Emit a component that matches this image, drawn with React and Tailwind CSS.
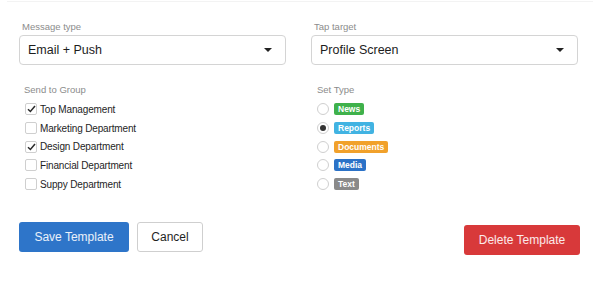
import React from 'react';

const font = { fontFamily: '"Liberation Sans", Arial, sans-serif' };

// Groups shown in the "Send to Group" list
const groups = [
    { name: 'Top Management', checked: true },
    { name: 'Marketing Department', checked: false },
    { name: 'Design Department', checked: true },
    { name: 'Financial Department', checked: false },
    { name: 'Suppy Department', checked: false },
];

// Types with their badge colours
const types = [
    { name: 'News', cls: 'bg-[#3fb14b]', checked: false },
    { name: 'Reports', cls: 'bg-[#41b3e2]', checked: true },
    { name: 'Documents', cls: 'bg-[#f1a12b]', checked: false },
    { name: 'Media', cls: 'bg-[#2b72c7]', checked: false },
    { name: 'Text', cls: 'bg-[#8a8a8a]', checked: false },
];

const Caret = () => (
    <svg width="8" height="4" viewBox="0 0 8 4" className="mr-[3px]">
        <path d="M0 0 L8 0 L4 4 Z" fill="#222" />
    </svg>
);

const SelectBox = ({ label, value }) => (
    <div>
        <div className="text-[9.5px] leading-[13px] text-[#8c8c8c] ml-[3px]">{label}</div>
        <div className="mt-[2px] h-[30px] rounded-[4px] border border-[#d4d4d4] bg-white flex items-center justify-between pl-[8px] pr-[10px]">
            <span className="text-[12.5px] text-[#1d1d1d]">{value}</span>
            <Caret />
        </div>
    </div>
);

const Checkbox = ({ checked }) => (
    <span className="w-[12px] h-[12px] rounded-[2px] border border-[#cfcfcf] bg-white flex items-center justify-center">
        {checked && (
            <svg width="9" height="8" viewBox="0 0 9 8">
                <path d="M1 4.2 L3.4 6.5 L8 1" stroke="#2a2a2a" strokeWidth="1.5" fill="none" />
            </svg>
        )}
    </span>
);

const Radio = ({ checked }) => (
    <span className="w-[12px] h-[12px] rounded-full border border-[#cfcfcf] bg-white flex items-center justify-center">
        {checked && <span className="w-[6px] h-[6px] rounded-full bg-[#333]" />}
    </span>
);

const App = () => {
    return (
        <div className="w-[600px] h-[283px] bg-white relative overflow-hidden" style={font}>
            {/* faint edge of the section above */}
            <div className="mx-[7px] h-[2px] border-b border-[#f3f3f3]" />

            <div className="px-[19px] pt-[18px]">
                {/* Selects row */}
                <div className="grid grid-cols-[267px_267px] gap-x-[25px]">
                    <SelectBox label="Message type" value="Email + Push" />
                    <SelectBox label="Tap target" value="Profile Screen" />
                </div>

                {/* Groups and types */}
                <div className="grid grid-cols-[267px_267px] gap-x-[25px] mt-[18px]">
                    <div className="pl-[5px]">
                        <div className="text-[9.5px] leading-[13px] text-[#8c8c8c]">Send to Group</div>
                        <div className="mt-[4px] flex flex-col">
                            {groups.map((g) => (
                                <div key={g.name} className="h-[18.7px] flex items-center gap-[3px] pl-[1px]">
                                    <Checkbox checked={g.checked} />
                                    <span className="text-[10px] tracking-[-0.15px] text-[#1e1e1e]">{g.name}</span>
                                </div>
                            ))}
                        </div>
                    </div>
                    <div className="pl-[6px]">
                        <div className="text-[9.5px] leading-[13px] text-[#8c8c8c]">Set Type</div>
                        <div className="mt-[4px] flex flex-col">
                            {types.map((t) => (
                                <div key={t.name} className="h-[18.7px] flex items-center gap-[5px]">
                                    <Radio checked={t.checked} />
                                    <span className={`${t.cls} text-white text-[8.5px] font-bold leading-[12px] h-[12px] px-[4px] rounded-[2px]`}>
                                        {t.name}
                                    </span>
                                </div>
                            ))}
                        </div>
                    </div>
                </div>

                {/* Actions */}
                <div className="mt-[29px] flex items-start justify-between">
                    <div className="flex gap-[8px]">
                        <button className="w-[110px] h-[30px] rounded-[3px] bg-[#2e75c9] text-white/90 text-[12px]">Save Template</button>
                        <button className="w-[66px] h-[30px] rounded-[3px] border border-[#cfcfcf] bg-white text-[#1f1f1f] text-[12px]">Cancel</button>
                    </div>
                    <button className="mt-[3px] mr-[1px] w-[116px] h-[30px] rounded-[3px] bg-[#d8393a] text-white/90 text-[12px]">Delete Template</button>
                </div>
            </div>
        </div>
    );
};

export default App;
